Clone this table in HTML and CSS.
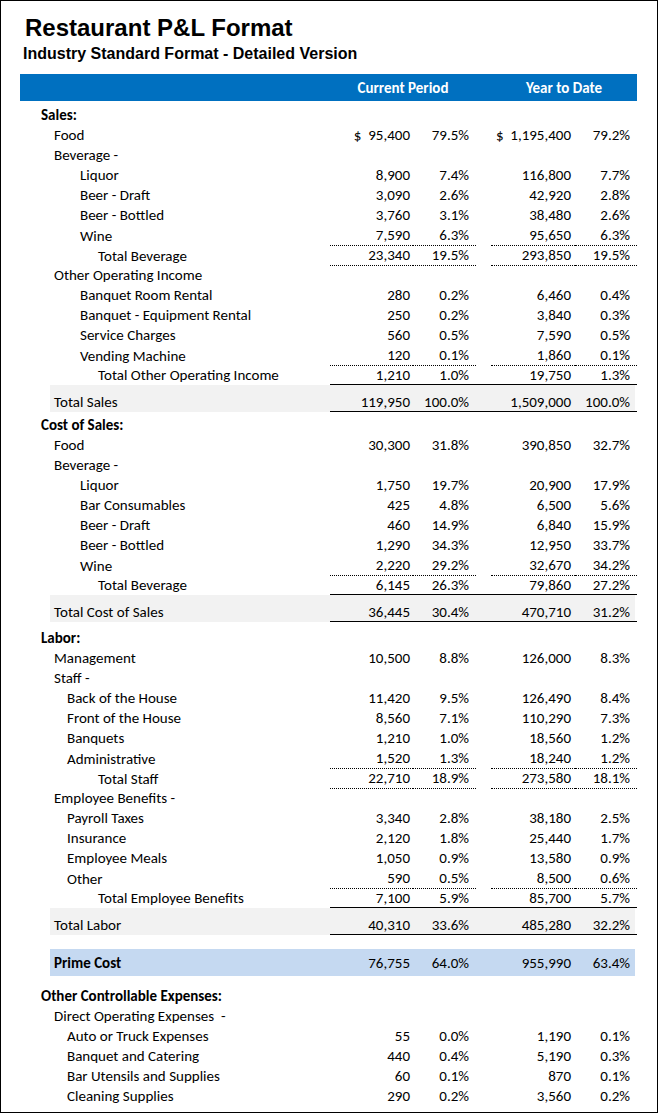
FILE: index.html
```html
<!DOCTYPE html>
<html>
<head>
<meta charset="utf-8">
<link rel="stylesheet" href="styles.css">
</head>
<body>
<div class="sheet">
  <h1 class="title">Restaurant P&amp;L Format</h1>
  <h2 class="subtitle">Industry Standard Format - Detailed Version</h2>
  <div class="table">
    <div class="head">
      <span class="hc1">Current Period</span>
      <span class="hc2">Year to Date</span>
    </div>

    <div class="row sec h24"><span class="lbl">Sales:</span></div>
    <div class="row"><span class="lbl l1">Food</span><span class="n1">$&nbsp; 95,400</span><span class="p1">79.5%</span><span class="n2">$&nbsp; 1,195,400</span><span class="p2">79.2%</span></div>
    <div class="row"><span class="lbl l1">Beverage -</span></div>
    <div class="row"><span class="lbl l2">Liquor</span><span class="n1">8,900</span><span class="p1">7.4%</span><span class="n2">116,800</span><span class="p2">7.7%</span></div>
    <div class="row"><span class="lbl l2">Beer - Draft</span><span class="n1">3,090</span><span class="p1">2.6%</span><span class="n2">42,920</span><span class="p2">2.8%</span></div>
    <div class="row"><span class="lbl l2">Beer - Bottled</span><span class="n1">3,760</span><span class="p1">3.1%</span><span class="n2">38,480</span><span class="p2">2.6%</span></div>
    <div class="row dot"><span class="lbl l2">Wine</span><span class="n1">7,590</span><span class="p1">6.3%</span><span class="n2">95,650</span><span class="p2">6.3%</span></div>
    <div class="row dot"><span class="lbl lt">Total Beverage</span><span class="n1">23,340</span><span class="p1">19.5%</span><span class="n2">293,850</span><span class="p2">19.5%</span></div>
    <div class="row"><span class="lbl l1">Other Operating Income</span></div>
    <div class="row"><span class="lbl l2">Banquet Room Rental</span><span class="n1">280</span><span class="p1">0.2%</span><span class="n2">6,460</span><span class="p2">0.4%</span></div>
    <div class="row"><span class="lbl l2">Banquet - Equipment Rental</span><span class="n1">250</span><span class="p1">0.2%</span><span class="n2">3,840</span><span class="p2">0.3%</span></div>
    <div class="row"><span class="lbl l2">Service Charges</span><span class="n1">560</span><span class="p1">0.5%</span><span class="n2">7,590</span><span class="p2">0.5%</span></div>
    <div class="row dot"><span class="lbl l2">Vending Machine</span><span class="n1">120</span><span class="p1">0.1%</span><span class="n2">1,860</span><span class="p2">0.1%</span></div>
    <div class="row solid"><span class="lbl lt">Total Other Operating Income</span><span class="n1">1,210</span><span class="p1">1.0%</span><span class="n2">19,750</span><span class="p2">1.3%</span></div>
    <div class="row grand solid"><span class="lbl l1">Total Sales</span><span class="n1">119,950</span><span class="p1">100.0%</span><span class="n2">1,509,000</span><span class="p2">100.0%</span></div>

    <div class="row sec h23"><span class="lbl">Cost of Sales:</span></div>
    <div class="row"><span class="lbl l1">Food</span><span class="n1">30,300</span><span class="p1">31.8%</span><span class="n2">390,850</span><span class="p2">32.7%</span></div>
    <div class="row"><span class="lbl l1">Beverage -</span></div>
    <div class="row"><span class="lbl l2">Liquor</span><span class="n1">1,750</span><span class="p1">19.7%</span><span class="n2">20,900</span><span class="p2">17.9%</span></div>
    <div class="row"><span class="lbl l2">Bar Consumables</span><span class="n1">425</span><span class="p1">4.8%</span><span class="n2">6,500</span><span class="p2">5.6%</span></div>
    <div class="row"><span class="lbl l2">Beer - Draft</span><span class="n1">460</span><span class="p1">14.9%</span><span class="n2">6,840</span><span class="p2">15.9%</span></div>
    <div class="row"><span class="lbl l2">Beer - Bottled</span><span class="n1">1,290</span><span class="p1">34.3%</span><span class="n2">12,950</span><span class="p2">33.7%</span></div>
    <div class="row dot"><span class="lbl l2">Wine</span><span class="n1">2,220</span><span class="p1">29.2%</span><span class="n2">32,670</span><span class="p2">34.2%</span></div>
    <div class="row solid"><span class="lbl lt">Total Beverage</span><span class="n1">6,145</span><span class="p1">26.3%</span><span class="n2">79,860</span><span class="p2">27.2%</span></div>
    <div class="row grand solid"><span class="lbl l1">Total Cost of Sales</span><span class="n1">36,445</span><span class="p1">30.4%</span><span class="n2">470,710</span><span class="p2">31.2%</span></div>

    <div class="row sec h26"><span class="lbl">Labor:</span></div>
    <div class="row"><span class="lbl l1">Management</span><span class="n1">10,500</span><span class="p1">8.8%</span><span class="n2">126,000</span><span class="p2">8.3%</span></div>
    <div class="row"><span class="lbl l1">Staff -</span></div>
    <div class="row"><span class="lbl l2b">Back of the House</span><span class="n1">11,420</span><span class="p1">9.5%</span><span class="n2">126,490</span><span class="p2">8.4%</span></div>
    <div class="row"><span class="lbl l2b">Front of the House</span><span class="n1">8,560</span><span class="p1">7.1%</span><span class="n2">110,290</span><span class="p2">7.3%</span></div>
    <div class="row"><span class="lbl l2b">Banquets</span><span class="n1">1,210</span><span class="p1">1.0%</span><span class="n2">18,560</span><span class="p2">1.2%</span></div>
    <div class="row dot"><span class="lbl l2b">Administrative</span><span class="n1">1,520</span><span class="p1">1.3%</span><span class="n2">18,240</span><span class="p2">1.2%</span></div>
    <div class="row dot"><span class="lbl lt">Total Staff</span><span class="n1">22,710</span><span class="p1">18.9%</span><span class="n2">273,580</span><span class="p2">18.1%</span></div>
    <div class="row"><span class="lbl l1">Employee Benefits -</span></div>
    <div class="row"><span class="lbl l2b">Payroll Taxes</span><span class="n1">3,340</span><span class="p1">2.8%</span><span class="n2">38,180</span><span class="p2">2.5%</span></div>
    <div class="row"><span class="lbl l2b">Insurance</span><span class="n1">2,120</span><span class="p1">1.8%</span><span class="n2">25,440</span><span class="p2">1.7%</span></div>
    <div class="row"><span class="lbl l2b">Employee Meals</span><span class="n1">1,050</span><span class="p1">0.9%</span><span class="n2">13,580</span><span class="p2">0.9%</span></div>
    <div class="row dot"><span class="lbl l2b">Other</span><span class="n1">590</span><span class="p1">0.5%</span><span class="n2">8,500</span><span class="p2">0.6%</span></div>
    <div class="row solid"><span class="lbl lt">Total Employee Benefits</span><span class="n1">7,100</span><span class="p1">5.9%</span><span class="n2">85,700</span><span class="p2">5.7%</span></div>
    <div class="row grand solid"><span class="lbl l1">Total Labor</span><span class="n1">40,310</span><span class="p1">33.6%</span><span class="n2">485,280</span><span class="p2">32.2%</span></div>

    <div class="spacer"></div>
    <div class="row prime"><span class="lbl l1">Prime Cost</span><span class="n1">76,755</span><span class="p1">64.0%</span><span class="n2">955,990</span><span class="p2">63.4%</span></div>

    <div class="row sec h30"><span class="lbl">Other Controllable Expenses:</span></div>
    <div class="row"><span class="lbl l1">Direct Operating Expenses&nbsp; -</span></div>
    <div class="row"><span class="lbl l2b">Auto or Truck Expenses</span><span class="n1">55</span><span class="p1">0.0%</span><span class="n2">1,190</span><span class="p2">0.1%</span></div>
    <div class="row"><span class="lbl l2b">Banquet and Catering</span><span class="n1">440</span><span class="p1">0.4%</span><span class="n2">5,190</span><span class="p2">0.3%</span></div>
    <div class="row"><span class="lbl l2b">Bar Utensils and Supplies</span><span class="n1">60</span><span class="p1">0.1%</span><span class="n2">870</span><span class="p2">0.1%</span></div>
    <div class="row"><span class="lbl l2b">Cleaning Supplies</span><span class="n1">290</span><span class="p1">0.2%</span><span class="n2">3,560</span><span class="p2">0.2%</span></div>
  </div>
</div>
</body>
</html>
```

FILE: styles.css
```css
* { box-sizing: border-box; }
html, body { margin: 0; padding: 0; background: #fff; }
.sheet {
  width: 658px;
  height: 1113px;
  border: 1px solid #000;
  overflow: hidden;
  padding-top: 13px;
  color: #000;
}
.title {
  margin: 0 0 0 24px;
  font: bold 24px/28px "Liberation Sans", Arial, sans-serif;
}
.subtitle {
  margin: 2px 0 0 22px;
  font: bold 16px/20px "Liberation Sans", Arial, sans-serif;
}
.table {
  margin: 10px 0 0 19px;
  width: 617px;
  font-family: Carlito, Calibri, Lato, sans-serif;
  font-size: 15px;
}
.head, .row {
  display: grid;
  grid-template-columns: 30px 280px 83px 63px 15px 84px 62px;
}
.head {
  height: 27px;
  background: #0070c0;
  color: #fff;
  font-weight: bold;
  align-items: center;
}
.hc1 { grid-column: 3 / 5; text-align: center; }
.hc2 { grid-column: 6 / 8; text-align: center; }

.row {
  height: 20px;
  line-height: 20px;
  white-space: nowrap;
}
.row > span {
  grid-row: 1;
  display: flex;
  align-items: flex-end;
  position: relative;
  z-index: 1;
}
.lbl { grid-column: 1 / 3; }
.n1 { grid-column: 3; justify-content: flex-end; padding-right: 3px; }
.p1 { grid-column: 4; justify-content: flex-end; padding-right: 7px; }
.n2 { grid-column: 6; justify-content: flex-end; padding-right: 4px; }
.p2 { grid-column: 7; justify-content: flex-end; padding-right: 7px; }

.sec .lbl { padding-left: 21px; font-weight: bold; }
.l1 { padding-left: 34px; }
.l2 { padding-left: 60px; }
.l2b { padding-left: 47px; }
.lt { padding-left: 78px; }

.h23 { height: 23px; }
.h24 { height: 24px; }
.h26 { height: 26px; }
.h30 { height: 30px; }

.dot .n1, .dot .p1, .dot .n2, .dot .p2 {
  border-bottom: 1px dotted #000;
}
.solid::after {
  content: "";
  grid-row: 1;
  grid-column: 3 / 8;
  border-bottom: 1px solid #000;
}
.grand { height: 27px; }
.grand::before {
  content: "";
  grid-row: 1;
  grid-column: 2 / 8;
  background: #f2f2f2;
  margin-right: 2px;
}

.spacer { height: 14px; }
.prime { height: 27px; }
.prime::before {
  content: "";
  grid-row: 1;
  grid-column: 2 / 8;
  background: #c5d9f1;
  margin-right: 2px;
}
.prime > span { align-items: center; }
.prime .lbl { font-weight: bold; }
```
